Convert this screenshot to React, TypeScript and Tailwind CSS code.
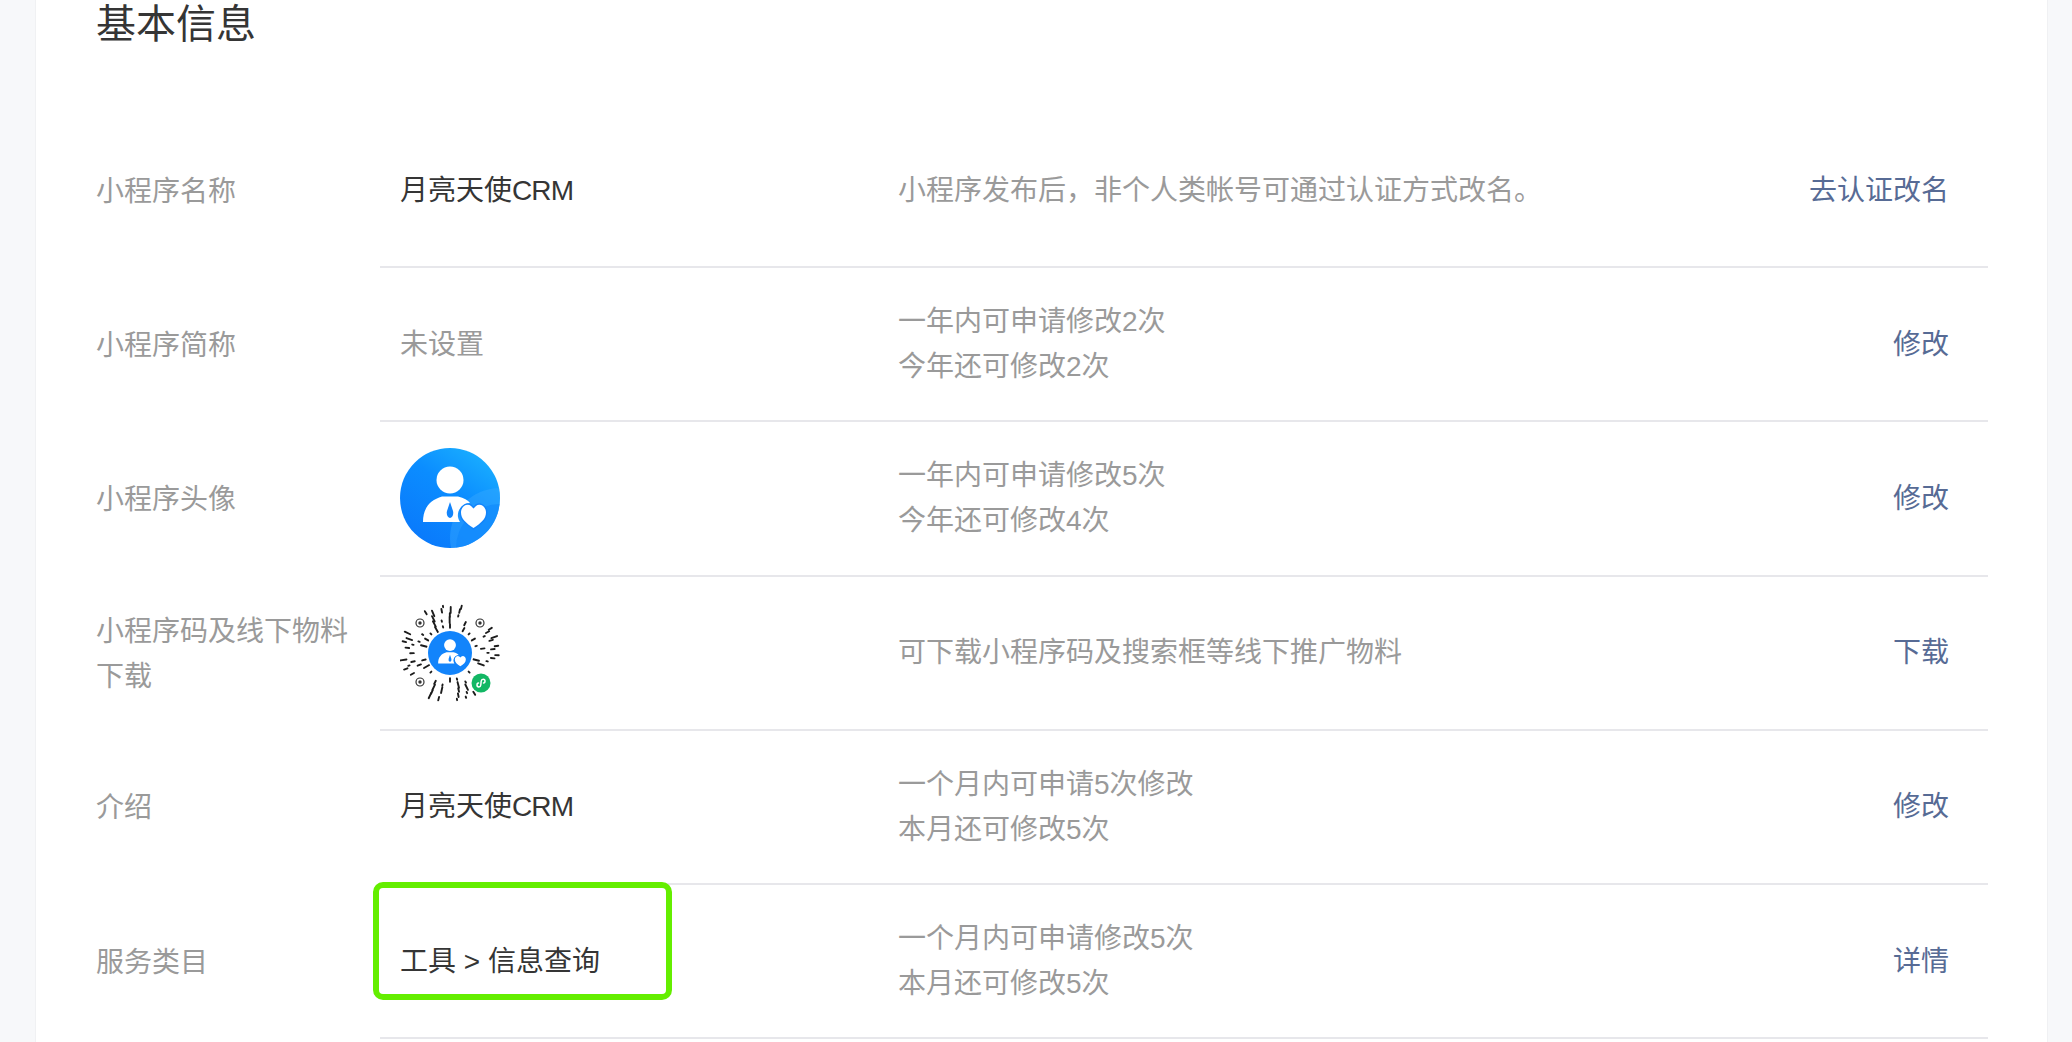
const fontStack = 'font-["Liberation_Sans","Noto_Sans_CJK_SC",sans-serif]';

// deterministic pseudo random, so that the code looks the same on each render
const rnd = (i: number) => {
  const x = Math.sin(i * 12.9898) * 43758.5453;
  return x - Math.floor(x);
};

function AvatarMark() {
  return (
    <>
      <circle cx="50" cy="32" r="13.5" fill="#fff" />
      <path d="M23 74C23 60 30 52 42 48.5L58 48.5C64 50 68 52 70 55C62 56 57 62 58 69C58.500 71 59 72.500 60 74Z" fill="#fff" />
      <path d="M50 54L53 63C54 67 52 70 50 70C48 70 46 67 47 63Z" fill="#1284fb" />
      <path d="M73.500 80C66 75 61 71 61 64.500C61 58 67.500 55 71 58L73.500 60.500L76 58C79.500 55 86 58 86 64.500C86 71 81 75 73.500 80Z" fill="#fff" stroke="#1284fb" strokeWidth="3" paintOrder="stroke" />
    </>
  );
}

function Avatar() {
  return (
    <svg width="100" height="100" viewBox="0 0 100 100">
      <defs>
        <linearGradient id="avatarBg" x1="0.9" y1="0" x2="0.2" y2="1">
          <stop offset="0" stopColor="#1cb4ff" />
          <stop offset="0.45" stopColor="#0b8dff" />
          <stop offset="1" stopColor="#0a78fb" />
        </linearGradient>
        <clipPath id="avatarClip">
          <circle cx="50" cy="50" r="50" />
        </clipPath>
      </defs>
      <circle cx="50" cy="50" r="50" fill="url(#avatarBg)" />
      <g clipPath="url(#avatarClip)">
        <circle cx="100" cy="90" r="50" fill="#38a8ff" opacity="0.45" />
        <circle cx="100" cy="100" r="44" fill="#0a84fb" opacity="0.5" />
      </g>
      <AvatarMark />
    </svg>
  );
}

function QrCode() {
  const dashes: { x1: number; y1: number; x2: number; y2: number }[] = [];
  const rings = [27, 33, 38, 43, 47];
  rings.forEach((r, ri) => {
    const count = 24 + ri * 2;
    for (let i = 0; i < count; i++) {
      const a = (i / count) * Math.PI * 2 + ri * 0.11;
      const seed = rnd(ri * 100 + i);
      if (seed < 0.38) continue;
      const cx = Math.cos(a) * r;
      const cy = Math.sin(a) * r;
      const inEye = [[-30, -30], [30, -30], [-30, 29], [31, 30]].some(([ex, ey]) => Math.hypot(cx - ex, cy - ey) < 10);
      if (inEye) continue;
      const len = seed > 0.85 ? 3 : seed > 0.6 ? 1.8 : 0.7;
      dashes.push({
        x1: Math.cos(a) * (r - len),
        y1: Math.sin(a) * (r - len),
        x2: Math.cos(a) * (r + len),
        y2: Math.sin(a) * (r + len),
      });
    }
  });

  return (
    <svg width="100" height="100" viewBox="-50 -50 100 100">
      {dashes.map((d, i) => (
        <line key={i} x1={d.x1} y1={d.y1} x2={d.x2} y2={d.y2} stroke="#1c1c1c" strokeWidth="1.9" strokeLinecap="round" />
      ))}
      {[[-30, -30], [30, -30], [-30, 29]].map(([x, y]) => (
        <g key={`${x}${y}`}>
          <circle cx={x} cy={y} r="4" fill="none" stroke="#333" strokeWidth="1.2" />
          <circle cx={x} cy={y} r="1.700" fill="#333" />
        </g>
      ))}
      <circle cx="0" cy="0" r="23.500" fill="#fff" />
      <g transform="translate(-22 -22) scale(0.44)">
        <circle cx="50" cy="50" r="50" fill="#1284fb" />
        <AvatarMark />
      </g>
      <circle cx="31" cy="30" r="10.500" fill="#fff" />
      <circle cx="31" cy="30" r="9.500" fill="#12b764" />
      <path d="M27 32C27 34.500 30.500 34.500 30.800 32L31.200 28C31.500 25.500 35 25.500 35 28C35 29.500 34 30 33.500 30M28.500 30C28 30 27 30.500 27 32" fill="none" stroke="#fff" strokeWidth="1.500" strokeLinecap="round" />
    </svg>
  );
}

const appName = (
  <span className="text-[#353535]">
    月亮天使<span className="tracking-[-0.9px]">CRM</span>
  </span>
);

const rows = [
  {
    label: ['小程序名称'],
    value: appName,
    desc: ['小程序发布后，非个人类帐号可通过认证方式改名。'],
    action: '去认证改名',
  },
  {
    label: ['小程序简称'],
    value: <span className="text-[#9a9a9a]">未设置</span>,
    desc: ['一年内可申请修改2次', '今年还可修改2次'],
    action: '修改',
  },
  {
    label: ['小程序头像'],
    value: <Avatar />,
    desc: ['一年内可申请修改5次', '今年还可修改4次'],
    action: '修改',
  },
  {
    label: ['小程序码及线下物料', '下载'],
    value: <QrCode />,
    desc: ['可下载小程序码及搜索框等线下推广物料'],
    action: '下载',
  },
  {
    label: ['介绍'],
    value: appName,
    desc: ['一个月内可申请5次修改', '本月还可修改5次'],
    action: '修改',
  },
  {
    label: ['服务类目'],
    value: <span className="text-[#353535]">工具 &gt; 信息查询</span>,
    desc: ['一个月内可申请修改5次', '本月还可修改5次'],
    action: '详情',
    highlight: true,
  },
];

export default function App() {
  return (
    <div className={`h-[1042px] overflow-hidden bg-[#f7f8fa] ${fontStack}`}>
      <div className="ml-[35px] mr-[24px] h-full border-x border-[#f0f1f3] bg-white pl-[60px] pr-[59px]">
        <h2 className="pt-[3px] text-[40px] leading-[42px] text-[#353535]">基本信息</h2>
        <div className="mt-[69px]">
          {rows.map((row, i) => (
            <div key={i} className="flex items-stretch">
              <div className="flex w-[284px] shrink-0 items-center text-[28px] leading-[45px] text-[#9a9a9a]">
                <div>
                  {row.label.map((line) => (
                    <div key={line}>{line}</div>
                  ))}
                </div>
              </div>
              <div className="relative flex h-[154.2px] flex-1 items-center border-b-2 border-[#e7e7eb] text-[28px] leading-[45px]">
                <div className="flex w-[518px] shrink-0 items-center pl-[20px]">{row.value}</div>
                <div className="flex-1 text-[#9a9a9a]">
                  {row.desc.map((line) => (
                    <div key={line}>{line}</div>
                  ))}
                </div>
                <div className="pr-[39px] text-[#576b95]">{row.action}</div>
                {row.highlight && (
                  <div className="absolute top-[-3px] left-[-7px] h-[118px] w-[299px] rounded-[10px] border-[6px] border-[#64ee00]" />
                )}
              </div>
            </div>
          ))}
        </div>
      </div>
    </div>
  );
}
